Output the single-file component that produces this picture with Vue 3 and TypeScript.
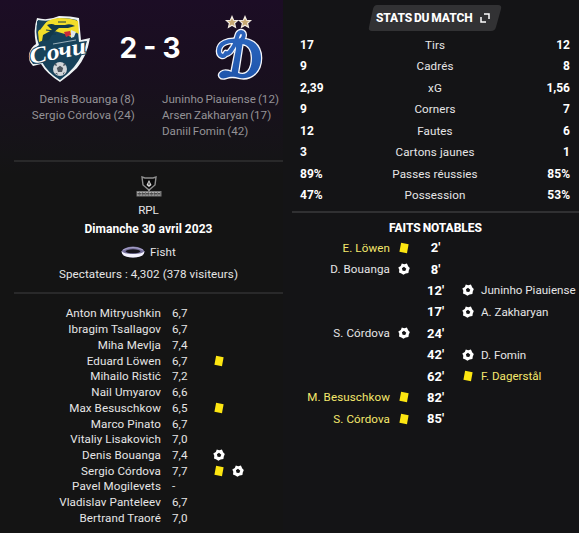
<template>
  <div class="match">
    <section class="overview">
      <header class="scoreboard">
        <svg class="crest home-crest" viewBox="0 0 64 68">
          <path d="M9 3 Q20 6 31 1 Q43 1 51 3 Q52 15 53 25 L62 23 Q59 41 49 53 Q42 60 32 67 Q18 58 13 49 L5 51 Q0 46 1 39 Q3 32 8 29 Q5 15 9 3Z" fill="#eef3f4" />
          <path d="M10 5 Q22 7 31 3 Q42 3 49 5 Q50 17 51 27 L59 26 Q55 41 46 52 Q39 60 32 65 Q20 58 14 47 L5 49 Q2 44 4 39 Q5 34 11 30 Q6 17 10 5Z" fill="#17425a" />
          <path d="M10 17 Q16 4 31 3 Q43 3 50 6 L51 19 Q43 15 43 22 L37 19 L30 17 Q23 14 19 24 L11 27Z" fill="#f2dd29" />
          <path d="M9 6 Q14 7 19 6 L12 15 L9 14Z" fill="#17425a" />
          <path d="M19 10 Q24 8 27 10 L37 10 Q42 8 47 11 L40 13 L31 13 Q25 17 21 25 L14 26 L15 20 L24 15Z" fill="#12384b" />
          <path d="M18 15 l8 1 M20 19 l8 0 M30 7 l8 0" stroke="#12384b" stroke-width="1.2" />
          <path d="M36 17 l6 -1 l1 4 l-5 2Z" fill="#c92c3b" />
          <path d="M43 15 l5 2 l-2 5 l-3 1Z" fill="#dce8ea" />
          <text x="3" y="49" class="crest-word" transform="rotate(-11 3 49)" textLength="57" lengthAdjust="spacingAndGlyphs">Сочи</text>
          <path d="M25 29 L48 25" stroke="#b9c9d0" stroke-width=".8" />
          <circle cx="32" cy="54" r="7" fill="#d2d6d9" />
          <path d="M32 50.8 l3.2 2.3 l-1.2 3.8 h-4 l-1.2 -3.8Z M26 50 l2 -2 l1 3Z M36 48 l2 2 l-3 1Z M27 58 l2 0 l1 2Z M37 57 l-2 1 l0 2Z" fill="#4b555e" />
        </svg>
        <div class="score">2 - 3</div>
        <svg class="crest away-crest" viewBox="0 0 48 68">
          <defs>
            <linearGradient id="dynamoBlue" x1="0" y1="0" x2="0" y2="1">
              <stop offset="0" stop-color="#2a65bd" />
              <stop offset="1" stop-color="#1f55ac" />
            </linearGradient>
          </defs>
          <g fill="#c8aa73" stroke="#f3ece2" stroke-width="1.2">
            <path d="M17 1.5 l1.6 3.8 4 .3 -3 2.7 .9 4 -3.5 -2.1 -3.5 2.1 .9 -4 -3 -2.7 4 -.3Z" />
            <path d="M30 1.5 l1.6 3.8 4 .3 -3 2.7 .9 4 -3.5 -2.1 -3.5 2.1 .9 -4 -3 -2.7 4 -.3Z" />
          </g>
          <g stroke-linecap="round" stroke-linejoin="round">
            <path :d="dynamoBody" fill="#f5f7fc" fill-rule="evenodd" stroke="#f5f7fc" stroke-width="2.6" />
            <path :d="dynamoCurl" fill="none" stroke="#f5f7fc" stroke-width="6.6" />
            <path :d="dynamoBody" fill="url(#dynamoBlue)" fill-rule="evenodd" />
            <path :d="dynamoCurl" fill="none" stroke="#2a62ba" stroke-width="4" />
          </g>
        </svg>
      </header>

      <div class="scorers">
        <ul class="home-scorers">
          <li v-for="s in homeScorers" :key="s">{{ s }}</li>
        </ul>
        <ul>
          <li v-for="s in awayScorers" :key="s">{{ s }}</li>
        </ul>
      </div>

      <div class="info">
        <svg class="league-logo" viewBox="0 0 26 21">
          <path d="M6 1 L9 2 H17 L20 1 L19 9 L13 14 L7 9Z" fill="#090909" stroke="#8e8e8e" stroke-width="1.4" />
          <path d="M13 4 L15.5 9 L13 11 L10.5 9Z" fill="#ddd" />
          <path d="M13 6.5 v2.5" stroke="#222" />
          <path d="M13 13 v2" stroke="#999" stroke-width="1.5" />
          <rect x=".5" y="15" width="25" height="5.5" fill="#777" />
          <path d="M1 16.5 H25 M1 19 H25" stroke="#aaa" stroke-width="1" stroke-dasharray="2 1" />
          <path d="M2 17.8 H24" stroke="#303030" stroke-width=".8" stroke-dasharray="3 1" />
        </svg>
        <div class="league">RPL</div>
        <div class="date">Dimanche 30 avril 2023</div>
        <div class="venue">
          <svg class="stadium" viewBox="0 0 24 12">
            <ellipse cx="12" cy="6" rx="11.5" ry="5.4" fill="#77719e" />
            <path d="M.6 5 Q2 8 12 8 Q22 8 23.4 5 Q24 11.4 12 11.4 Q0 11.4 .6 5Z" fill="#f6f4ff" />
            <path d="M2 4 Q12 -1 22 4" fill="none" stroke="#aaa4c9" stroke-width="1" />
            <ellipse cx="12" cy="5.3" rx="7.5" ry="2" fill="#17151d" />
          </svg>
          <span>Fisht</span>
        </div>
        <div class="attendance">Spectateurs : 4,302 (378 visiteurs)</div>
      </div>

      <ul class="players">
        <li v-for="p in players" :key="p.name">
          <span class="player-name">{{ p.name }}</span>
          <span class="rating">{{ p.rating }}</span>
          <span class="player-icons">
            <svg v-for="icon in p.icons" :key="icon" class="icon" viewBox="0 0 12 12">
              <path v-if="icon === 'card'" :d="cardPath" fill="#fde611" />
              <path v-else :d="ballPath" fill="#fff" fill-rule="evenodd" />
            </svg>
          </span>
        </li>
      </ul>
    </section>

    <section class="details">
      <button class="stats-button" type="button">
        <svg class="button-shape" viewBox="0 0 134 26">
          <path d="M9 0 H130 Q134 0 133 4 L128 22 Q127 26 123 26 H4 Q0 26 1 22 L5 4 Q6 0 9 0Z" fill="#323234" />
        </svg>
        <span class="button-label">STATS DU MATCH</span>
        <svg class="expand" viewBox="0 0 10 10">
          <path d="M4 1 H9 V6 M1 4 V9 H6" fill="none" stroke="#fff" stroke-width="1.5" />
        </svg>
      </button>

      <div class="stats">
        <div v-for="s in stats" :key="s.label" class="stat-row">
          <b>{{ s.home }}</b>
          <span>{{ s.label }}</span>
          <b class="away-value">{{ s.away }}</b>
        </div>
      </div>

      <h2>FAITS NOTABLES</h2>

      <div class="events">
        <div v-for="e in events" :key="e.minute" :class="['event', e.side, e.type]">
          <span class="event-name">{{ e.name }}</span>
          <svg class="icon" viewBox="0 0 12 12">
            <path v-if="e.type === 'card'" :d="cardPath" fill="#fde611" />
            <path v-else :d="ballPath" fill="#fff" fill-rule="evenodd" />
          </svg>
          <b class="minute">{{ e.minute }}'</b>
        </div>
      </div>
    </section>
  </div>
</template>

<script setup lang="ts">
type Icon = 'card' | 'goal';

interface Player {
  name: string;
  rating: string;
  icons?: Icon[];
}

interface MatchEvent {
  minute: number;
  name: string;
  side: 'home' | 'away';
  type: Icon;
}

const cardPath = 'M3.1 .8 L10.6 2.3 L9 11.2 L1.4 9.7 Z';
const ballPath = 'M3.8 .6 L6.2 1.3 L8.9 .6 L10.3 3.4 L11.8 5.1 L10.8 7.4 L10.4 10 L7.6 10.4 L5.4 11.7 L3.4 10.4 L1 9.5 L1.3 6.8 L.3 4.4 L2.8 2.9 Z M6 3.8 L3.9 5.3 L4.6 7.8 L7.2 8 L8.3 5.7 Z';
const dynamoBody = 'M21 25 C36 21 46 30 46 43 C46 57 36 65 25 63 C19 61.5 16 61 11 63 C5 65 2 60 6 57 C10 54 14 56 16.5 57 L21 34 Z M27.5 29 L23 58 C32 62 37 54 37 43 C37 35 33.5 30 27.5 29 Z';
const dynamoCurl = 'M11 38 C9 43 4 41 4 36 C4 28 13 25 22 26 C29 27 31 17 26 17 C21 17 23 27 17 34 Q15 38 11 39';

const homeScorers = ['Denis Bouanga (8)', 'Sergio Córdova (24)'];
const awayScorers = ['Juninho Piauiense (12)', 'Arsen Zakharyan (17)', 'Daniil Fomin (42)'];

const players: Player[] = [
  { name: 'Anton Mitryushkin', rating: '6,7' },
  { name: 'Ibragim Tsallagov', rating: '6,7' },
  { name: 'Miha Mevlja', rating: '7,4' },
  { name: 'Eduard Löwen', rating: '6,7', icons: ['card'] },
  { name: 'Mihailo Ristić', rating: '7,2' },
  { name: 'Nail Umyarov', rating: '6,6' },
  { name: 'Max Besuschkow', rating: '6,5', icons: ['card'] },
  { name: 'Marco Pinato', rating: '6,7' },
  { name: 'Vitaliy Lisakovich', rating: '7,0' },
  { name: 'Denis Bouanga', rating: '7,4', icons: ['goal'] },
  { name: 'Sergio Córdova', rating: '7,7', icons: ['card', 'goal'] },
  { name: 'Pavel Mogilevets', rating: '-' },
  { name: 'Vladislav Panteleev', rating: '6,7' },
  { name: 'Bertrand Traoré', rating: '7,0' },
];

const stats = [
  { label: 'Tirs', home: '17', away: '12' },
  { label: 'Cadrés', home: '9', away: '8' },
  { label: 'xG', home: '2,39', away: '1,56' },
  { label: 'Corners', home: '9', away: '7' },
  { label: 'Fautes', home: '12', away: '6' },
  { label: 'Cartons jaunes', home: '3', away: '1' },
  { label: 'Passes réussies', home: '89%', away: '85%' },
  { label: 'Possession', home: '47%', away: '53%' },
];

const events: MatchEvent[] = [
  { minute: 2, name: 'E. Löwen', side: 'home', type: 'card' },
  { minute: 8, name: 'D. Bouanga', side: 'home', type: 'goal' },
  { minute: 12, name: 'Juninho Piauiense', side: 'away', type: 'goal' },
  { minute: 17, name: 'A. Zakharyan', side: 'away', type: 'goal' },
  { minute: 24, name: 'S. Córdova', side: 'home', type: 'goal' },
  { minute: 42, name: 'D. Fomin', side: 'away', type: 'goal' },
  { minute: 62, name: 'F. Dagerstål', side: 'away', type: 'card' },
  { minute: 82, name: 'M. Besuschkow', side: 'home', type: 'card' },
  { minute: 85, name: 'S. Córdova', side: 'home', type: 'card' },
];
</script>

<style>
body {
  margin: 0;
  background: #141416;
}
</style>

<style scoped>
.match {
  display: grid;
  grid-template-columns: 283px 296px;
  width: 579px;
  height: 533px;
  overflow: hidden;
  background: #141416;
  color: #e6e6e6;
  font-family: Roboto, "Liberation Sans", sans-serif;
  font-size: 11.6px;
  letter-spacing: 0.1px;
  white-space: nowrap;
}

ul {
  list-style: none;
  margin: 0;
  padding: 0;
}

svg {
  display: block;
  overflow: visible;
}

b {
  color: #fff;
  font-size: 12px;
  font-weight: 700;
  letter-spacing: 0;
}

.overview {
  background: linear-gradient(#1c0d25 0, #190f1f 70px, #151417 155px, #141414 175px);
}

.scoreboard {
  display: grid;
  grid-template-columns: 64px 116px 48px;
  align-items: start;
  padding: 15px 0 0 28px;
  height: 76px;
}

.home-crest {
  width: 64px;
  height: 68px;
}

.away-crest {
  width: 48px;
  height: 68px;
  margin-left: 7px;
}

.crest-word {
  font: italic 700 23px "Liberation Serif", serif;
  fill: #fff;
  stroke: #17425a;
  stroke-width: 2px;
  paint-order: stroke;
  letter-spacing: 0;
}

.score {
  margin-top: 13px;
  color: #fff;
  font: 700 28px/40px Inter, sans-serif;
  letter-spacing: 0;
  word-spacing: -0.5px;
  text-align: center;
}

.scorers {
  display: grid;
  grid-template-columns: 135px 1fr;
  column-gap: 27px;
  box-sizing: border-box;
  height: 69px;
  padding-top: 1px;
  color: #949296;
  letter-spacing: 0;
  line-height: 15.8px;
  word-spacing: -0.8px;
}

.home-scorers {
  letter-spacing: 0.12px;
  text-align: right;
}

.info {
  display: flex;
  flex-direction: column;
  align-items: center;
  box-sizing: border-box;
  height: 134px;
  margin-left: 14px;
  padding-top: 14px;
  border-top: 2px solid #29292a;
  border-bottom: 2px solid #29292a;
  line-height: 16px;
}

.league-logo {
  width: 26px;
  height: 21px;
}

.league {
  margin-top: 5px;
  letter-spacing: 0;
}

.date {
  margin-top: 3px;
  color: #fff;
  font-size: 12px;
  font-weight: 700;
  letter-spacing: 0.03px;
}

.venue {
  display: flex;
  align-items: center;
  gap: 5px;
  margin-top: 7px;
}

.stadium {
  width: 24px;
  height: 12px;
}

.attendance {
  margin-top: 6px;
}

.players {
  padding-top: 11.5px;
}

.players li {
  display: grid;
  grid-template-columns: 161px 30px 1fr;
  column-gap: 11px;
  align-items: center;
  height: 15.74px;
}

.player-name {
  text-align: right;
}

.player-icons {
  display: flex;
  gap: 7px;
}

.icon {
  width: 12px;
  height: 12px;
}

.details {
  padding-top: 5px;
}

.stats-button {
  display: grid;
  align-items: center;
  grid-template-columns: 8px 97px 10px 1fr;
  width: 134px;
  height: 26px;
  margin: 0 0 0 85px;
  padding: 0;
  border: 0;
  background: none;
  color: #fff;
  font: 800 12px Roboto, sans-serif;
  letter-spacing: -0.1px;
  word-spacing: -1px;
}

.button-shape {
  grid-area: 1 / 1 / 2 / 5;
}

.button-label {
  grid-area: 1 / 2;
  text-align: left;
}

.expand {
  grid-area: 1 / 4;
  width: 10px;
  height: 10px;
  margin-left: -3px;
}

.stats {
  box-sizing: border-box;
  height: 182px;
  margin-left: 9px;
  padding: 3px 9px 0 8px;
  border-bottom: 2px solid #303032;
}

.stat-row {
  display: grid;
  grid-template-columns: 60px 1fr 60px;
  align-items: center;
  height: 21.5px;
  text-align: center;
}

.stat-row b:first-child {
  text-align: left;
}

.stat-row .away-value {
  text-align: right;
}

h2 {
  margin: 7px 0 1px 9px;
  color: #fff;
  font-size: 12px;
  font-weight: 800;
  letter-spacing: -0.05px;
  line-height: 16px;
  text-align: center;
  word-spacing: -1px;
}

.event {
  display: grid;
  grid-template-columns: 107px 18px 54px 12px 1fr;
  align-items: center;
  height: 21.4px;
}

.event > * {
  grid-row: 1;
}

.minute {
  grid-column: 3;
  padding-left: 1px;
  font-size: 13px;
  text-align: center;
}

.home .event-name {
  grid-column: 1;
  text-align: right;
}

.home .icon {
  grid-column: 2;
  margin-left: 8px;
}

.away .event-name {
  grid-column: 5;
  padding-left: 7px;
  letter-spacing: 0;
}

.away .icon {
  grid-column: 4;
}

.event.card .event-name {
  color: #f4e86c;
}
</style>
